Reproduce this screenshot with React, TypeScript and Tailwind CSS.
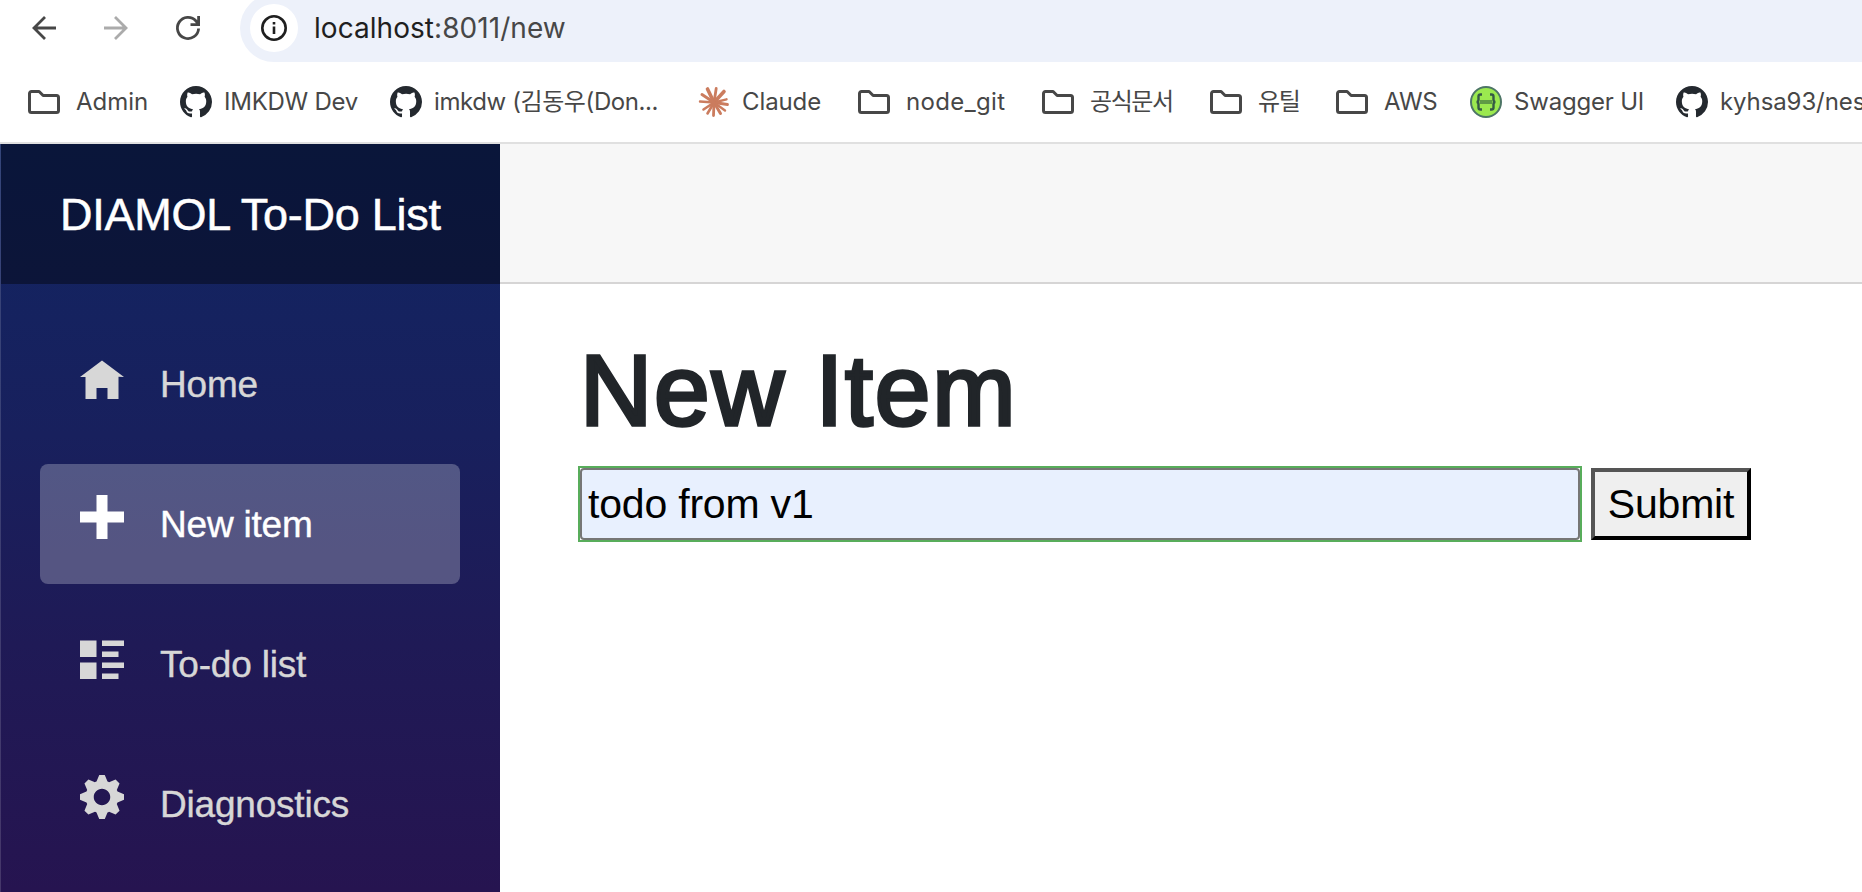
import React from "react";

const GITHUB =
  "M8 0C3.58 0 0 3.58 0 8c0 3.54 2.29 6.53 5.47 7.59.4.07.55-.17.55-.38 0-.19-.01-.82-.01-1.49-2.01.37-2.53-.49-2.69-.94-.09-.23-.48-.94-.82-1.13-.28-.15-.68-.52-.01-.53.63-.01 1.08.58 1.23.82.72 1.21 1.87.87 2.33.66.07-.52.28-.87.51-1.07-1.78-.2-3.64-.89-3.64-3.95 0-.87.31-1.59.82-2.15-.08-.2-.36-1.02.08-2.12 0 0 .67-.21 2.2.82.64-.18 1.32-.27 2-.27s1.36.09 2 .27c1.53-1.04 2.2-.82 2.2-.82.44 1.1.16 1.92.08 2.12.51.56.82 1.27.82 2.15 0 3.07-1.87 3.75-3.65 3.95.29.25.54.73.54 1.48 0 1.07-.01 1.93-.01 2.2 0 .21.15.46.55.38A8.01 8.01 0 0 0 16 8c0-4.42-3.58-8-8-8z";

function Github() {
  return (
    <svg className="size-8 shrink-0" viewBox="0 0 16 16" fill="#24292f">
      <path d={GITHUB} />
    </svg>
  );
}

function Folder() {
  return (
    <svg className="size-8 shrink-0" viewBox="0 0 32 32" fill="none" stroke="#474747" strokeWidth="3" strokeLinejoin="round">
      <path d="M1.5 7.5a2 2 0 0 1 2-2h7.6l4 4H28.5a2 2 0 0 1 2 2v13a2 2 0 0 1-2 2h-25a2 2 0 0 1-2-2z" />
    </svg>
  );
}

const RAYS: [number, number, number][] = [
  [9.5, 3, 3.6], [18.2, 2.5, 2.8], [26, 5.5, 3.6], [28.5, 13.3, 2.4], [29.5, 18.5, 2.8], [27, 24.5, 2.4],
  [22.5, 27.5, 3], [15.5, 29.5, 2.8], [9.5, 27.5, 2.6], [5.5, 23.5, 2.6], [2, 15.5, 2.4], [4, 8.5, 3],
];

function Claude() {
  return (
    <svg className="size-8 shrink-0" viewBox="0 0 32 32" stroke="#cb7c5e" strokeLinecap="round">
      {RAYS.map(([x, y, w], i) => (
        <line key={i} x1="16" y1="16.5" x2={x} y2={y} strokeWidth={w} />
      ))}
    </svg>
  );
}

function Swagger() {
  return (
    <svg className="size-8 shrink-0" viewBox="0 0 32 32" fill="none">
      <circle cx="16" cy="16" r="15" fill="#9be94f" stroke="#4d7566" strokeWidth="2" />
      <path d="M12 8.5h-1.5q-2 0-2 2v3q0 2.5-2 2.5q2 0 2 2.5v3q0 2 2 2H12M20 8.5h1.5q2 0 2 2v3q0 2.5 2 2.5q-2 0-2 2.5v3q0 2-2 2H20" stroke="#355a45" strokeWidth="2.4" />
      <path d="M10 16h12" stroke="#5f9a45" strokeWidth="4" />
    </svg>
  );
}

function Bookmark({ icon, box, children }: { icon: React.ReactNode; box: string; children: string }) {
  return (
    <div className={`flex shrink-0 items-center whitespace-nowrap ${box}`}>
      {icon}
      <span>{children}</span>
    </div>
  );
}

const HOME = "M4 0l-4 3h1v4h2v-2h2v2h2v-4.03l1 .03-4-3z";
const PLUS = "M3 0v3h-3v2h3v3h2v-3h3v-2h-3v-3h-2z";
const LIST = "M0 0v3h3v-3h-3zm4 0v1h4v-1h-4zm0 2v1h3v-1h-3zm-4 2v3h3v-3h-3zm4 0v1h4v-1h-4zm0 2v1h3v-1h-3z";
const COG =
  "M3.5 0l-.5 1.19c-.1.03-.19.08-.28.13l-1.19-.5-.72.72.5 1.19c-.05.1-.09.18-.13.28l-1.19.5v1l1.19.5c.04.1.08.18.13.28l-.5 1.19.72.72 1.19-.5c.09.04.18.09.28.13l.5 1.19h1l.5-1.19c.09-.04.19-.08.28-.13l1.19.5.72-.72-.5-1.19c.04-.09.09-.19.13-.28l1.19-.5v-1l-1.19-.5c-.03-.09-.08-.19-.13-.28l.5-1.19-.72-.72-1.19.5c-.09-.04-.19-.09-.28-.13l-.5-1.19h-1zm.5 2.5c.83 0 1.5.67 1.5 1.5s-.67 1.5-1.5 1.5-1.5-.67-1.5-1.5.67-1.5 1.5-1.5z";

function NavItem({ d, low, active, children }: { d: string; low?: boolean; active?: boolean; children: string }) {
  return (
    <a
      className={`flex h-[120px] rounded-lg pl-10 text-[37px] leading-[121px] tracking-[-0.2px] [-webkit-text-stroke:0.4px_currentColor] ${
        active ? "bg-white/25 text-white" : "text-[#d7d7d7]"
      }`}
    >
      <svg className="mt-[31px] mr-9 size-11 shrink-0" viewBox="0 0 8 8" fill="currentColor">
        <path d={d} transform={low ? "translate(0 1)" : undefined} />
      </svg>
      {children}
    </a>
  );
}

export default function App() {
  return (
    <div className="flex h-[892px] w-[1862px] flex-col overflow-hidden bg-white font-['Liberation_Sans',Arial,sans-serif]">
      <header className="h-36 shrink-0 overflow-hidden border-b-2 border-[#e0e0e0] font-[Inter,'Noto_Sans_CJK_KR',sans-serif] text-[#474747]">
        <div className="-mt-1.5 flex h-[68px] items-center">
          <div className="flex w-60 shrink-0 gap-12 pl-8">
            <svg className="size-6" viewBox="0 0 24 24" fill="none" stroke="#474747" strokeWidth="2.8">
              <path d="M24 12H2M13 1L2 12l11 11" />
            </svg>
            <svg className="size-6" viewBox="0 0 24 24" fill="none" stroke="#ababab" strokeWidth="2.8">
              <path d="M0 12h22M11 1l11 11-11 11" />
            </svg>
            <svg className="size-6 overflow-visible" viewBox="0 0 24 24" fill="none" stroke="#474747" strokeWidth="2.8">
              <path d="M22.6 12.5A10.6 10.6 0 1 1 20 5l2 3M22.6 0v8.6H14.5" />
            </svg>
          </div>
          <div className="flex h-[68px] flex-1 items-center rounded-l-full bg-[#edf1fa]">
            <div className="ml-2.5 flex size-12 items-center justify-center rounded-full bg-white">
              <svg className="size-[26px]" viewBox="0 0 26 26" fill="none" stroke="#1f1f1f" strokeWidth="2.6">
                <circle cx="13" cy="13" r="11.7" />
                <path d="M13 11.5v7.5M13 7v2.6" />
              </svg>
            </div>
            <div className="ml-4 text-[28px] tracking-[0.05px]">
              <span className="text-[#1f1f1f]">localhost</span>:8011/new
            </div>
          </div>
        </div>
        <div className="flex h-20 items-center pl-7 text-[24px]">
          <Bookmark icon={<Folder />} box="w-[152px] gap-4">Admin</Bookmark>
          <Bookmark icon={<Github />} box="w-[210px] gap-3 tracking-[-0.25px]">IMKDW Dev</Bookmark>
          <Bookmark icon={<Github />} box="w-[308px] gap-3 tracking-[-0.4px]">imkdw (김동우(Don...</Bookmark>
          <Bookmark icon={<Claude />} box="w-[160px] gap-3 tracking-[-0.1px]">Claude</Bookmark>
          <Bookmark icon={<Folder />} box="w-[184px] gap-4 tracking-[0.35px]">node_git</Bookmark>
          <Bookmark icon={<Folder />} box="w-[168px] gap-4 tracking-[-1.4px]">공식문서</Bookmark>
          <Bookmark icon={<Folder />} box="w-[126px] gap-4 tracking-[-1.4px]">유틸</Bookmark>
          <Bookmark icon={<Folder />} box="w-[134px] gap-4 tracking-[-0.3px]">AWS</Bookmark>
          <Bookmark icon={<Swagger />} box="w-[206px] gap-3 tracking-[-0.2px]">Swagger UI</Bookmark>
          <Bookmark icon={<Github />} box="w-[186px] gap-3 tracking-[-0.1px]">kyhsa93/nes</Bookmark>
        </div>
      </header>
      <div className="flex min-h-0 flex-1">
        <aside className="w-[500px] shrink-0 border-l border-white/15 bg-[linear-gradient(180deg,#112562_0px,#18205d_290px,#1f1a56_500px,#261450_748px)] bg-origin-border">
          <div className="flex h-[140px] items-center bg-black/40 pt-0.5 pl-[59px] text-[45px] tracking-[-0.25px] text-white [-webkit-text-stroke:0.5px_currentColor]">
            DIAMOL To-Do List
          </div>
          <nav className="flex flex-col gap-5 pt-10 pr-10 pl-[39px]">
            <NavItem d={HOME} low>Home</NavItem>
            <NavItem d={PLUS} active>New item</NavItem>
            <NavItem d={LIST} low>To-do list</NavItem>
            <NavItem d={COG}>Diagnostics</NavItem>
          </nav>
        </aside>
        <main className="flex-1">
          <div className="h-[140px] border-b-2 border-[#d6d5d5] bg-[#f7f7f7]" />
          <div className="pt-[46px] pl-[78px]">
            <h1 className="h-[136px] pl-0.5 text-[100px] leading-[120px] tracking-[1.9px] text-[#212529] [-webkit-text-stroke:3.5px_#212529]">
              New Item
            </h1>
            <div className="flex items-center gap-[9px] text-[41px] tracking-[-0.2px] text-black">
              <div className="border-2 border-[#58ad5b]">
                <input
                  className="block h-[72px] w-[1000px] rounded-[4px] border-2 border-[#767676] bg-[#e8f0fe] px-1.5 outline-none"
                  defaultValue="todo from v1"
                />
              </div>
              <button className="h-[72px] w-40 border-4 border-t-[#555] border-r-black border-b-black border-l-[#555] bg-[#efefef] pt-0.5">
                Submit
              </button>
            </div>
          </div>
        </main>
      </div>
    </div>
  );
}
